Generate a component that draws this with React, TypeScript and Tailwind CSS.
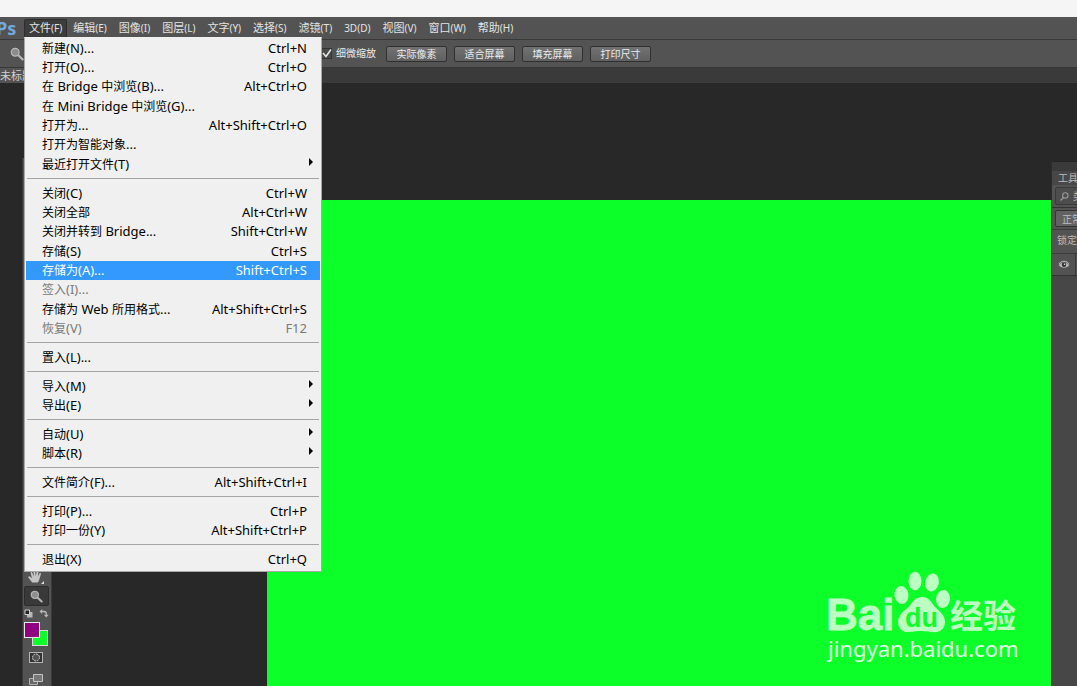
import React from "react";

type Item = { label: string; keys?: string; sub?: boolean; disabled?: boolean; active?: boolean };

const groups: Item[][] = [
  [
    { label: "新建(N)...", keys: "Ctrl+N" },
    { label: "打开(O)...", keys: "Ctrl+O" },
    { label: "在 Bridge 中浏览(B)...", keys: "Alt+Ctrl+O" },
    { label: "在 Mini Bridge 中浏览(G)..." },
    { label: "打开为...", keys: "Alt+Shift+Ctrl+O" },
    { label: "打开为智能对象..." },
    { label: "最近打开文件(T)", sub: true },
  ],
  [
    { label: "关闭(C)", keys: "Ctrl+W" },
    { label: "关闭全部", keys: "Alt+Ctrl+W" },
    { label: "关闭并转到 Bridge...", keys: "Shift+Ctrl+W" },
    { label: "存储(S)", keys: "Ctrl+S" },
    { label: "存储为(A)...", keys: "Shift+Ctrl+S", active: true },
    { label: "签入(I)...", disabled: true },
    { label: "存储为 Web 所用格式...", keys: "Alt+Shift+Ctrl+S" },
    { label: "恢复(V)", keys: "F12", disabled: true },
  ],
  [{ label: "置入(L)..." }],
  [
    { label: "导入(M)", sub: true },
    { label: "导出(E)", sub: true },
  ],
  [
    { label: "自动(U)", sub: true },
    { label: "脚本(R)", sub: true },
  ],
  [{ label: "文件简介(F)...", keys: "Alt+Shift+Ctrl+I" }],
  [
    { label: "打印(P)...", keys: "Ctrl+P" },
    { label: "打印一份(Y)", keys: "Alt+Shift+Ctrl+P" },
  ],
  [{ label: "退出(X)", keys: "Ctrl+Q" }],
];

const menus = ["文件(F)", "编辑(E)", "图像(I)", "图层(L)", "文字(Y)", "选择(S)", "滤镜(T)", "3D(D)", "视图(V)", "窗口(W)", "帮助(H)"];
const zoomButtons = ["实际像素", "适合屏幕", "填充屏幕", "打印尺寸"];

/* Latin runs are set in their own size beside the Chinese glyphs. */
function Mixed({ text, latin }: { text: string; latin: string }) {
  return (
    <>
      {text.split(/([\x20-\x7e]+)/).map((part, i) =>
        i % 2 ? (
          <span key={i} className={latin}>
            {part}
          </span>
        ) : (
          part
        ),
      )}
    </>
  );
}

function Magnifier({ className }: { className?: string }) {
  return (
    <svg viewBox="0 0 14 14" className={className} aria-hidden="true">
      <path d="M8 8l4.6 4.4" stroke="#b4b4b4" strokeWidth="2.2" strokeLinecap="round" />
      <circle cx="5.2" cy="5.2" r="3.9" fill="#8c8c8c" stroke="#b9b9b9" strokeWidth="1.2" />
    </svg>
  );
}

function MenuRow({ item }: { item: Item }) {
  const tone = item.active ? "bg-[#3399ff] text-white" : item.disabled ? "text-[#7a7a7a]" : "text-black";
  return (
    <li className="h-[19px] nth-[3n]:h-5">
      <button
        type="button"
        role="menuitem"
        disabled={item.disabled}
        className={`flex h-full w-full items-center justify-between pr-[13px] pl-4 text-left text-xs whitespace-pre ${tone}`}
      >
        <span>
          <Mixed text={item.label} latin="text-[13px]" />
        </span>
        {item.keys && <span className="text-[13px]">{item.keys}</span>}
        {item.sub && (
          <svg viewBox="0 0 4 8" className="-mr-1.5 mb-1.5 h-2 w-1" aria-hidden="true">
            <path d="M0 0l4 4-4 4z" fill="#000" />
          </svg>
        )}
      </button>
    </li>
  );
}

function FileMenu() {
  return (
    <div
      role="menu"
      aria-label="文件"
      className="absolute top-full left-6 z-10 -mt-0.5 w-[298px] border border-[#a8a8a8] border-t-[#f0f0f0] bg-[#f0f0f0] px-px pt-px pb-0.5"
    >
      {groups.map((g, i) => (
        <React.Fragment key={i}>
          {i > 0 && <hr className="mx-px mt-1 mb-[5px] border-t border-[#a5a5a5]" />}
          <ul>
            {g.map((item) => (
              <MenuRow key={item.label} item={item} />
            ))}
          </ul>
        </React.Fragment>
      ))}
    </div>
  );
}

function Toolbar() {
  return (
    <aside className="mt-[75px] ml-[22px] flex w-[30px] shrink-0 flex-col items-center border-x border-[#3a3a3a] bg-[#535353] pt-[410px] pr-0.5">
      <button type="button" aria-label="抓手工具" className="flex h-[18px] w-6 items-center justify-center">
        <svg viewBox="0 0 18 16" className="h-4 w-[18px]">
          <path
            d="M5.2 13.5L1.5 8.8c-.8-1 .5-2 1.4-1.200l2 1.600L3.700 4c-.2-1.200 1.200-1.500 1.600-.3L6.700 7.200 6.500 2c0-1.200 1.600-1.200 1.700 0l.5 5L9.900 2.200c.3-1.100 1.800-.8 1.600.3L10.900 7.500l1.500-3c.5-1 1.800-.4 1.500.7L12.300 10.500l-1.400 3z"
            fill="#c4c4c4"
          />
          <path d="M17 12v3h-3z" fill="#e0e0e0" />
        </svg>
      </button>
      <button
        type="button"
        aria-label="缩放工具"
        className="flex h-5 w-[25px] items-center justify-center rounded-xs border border-[#2c2c2c] bg-[#393939]"
      >
        <Magnifier className="h-[13px] w-[13px]" />
      </button>
      <div className="mt-[3px] flex gap-1.5">
        <button type="button" aria-label="默认前景色和背景色">
          <svg viewBox="0 0 9 9" className="h-[9px] w-[9px]">
            <path d="M3 3h5.500v5.500H3z" fill="#b8b8b8" />
            <path d="M1 1h4.500v4.500H1z" fill="#222" stroke="#d0d0d0" />
          </svg>
        </button>
        <button type="button" aria-label="切换前景色和背景色">
          <svg viewBox="0 0 10 9" className="h-[9px] w-[10px]">
            <path d="M2.500 2.500h2.500c1.500 0 2.300.8 2.300 2.200v1.800" fill="none" stroke="#b8b8b8" strokeWidth="1.300" />
            <path d="M3.200 0v5L.5 2.500zM4.900 5.800h4.800L7.300 8.600z" fill="#b8b8b8" />
          </svg>
        </button>
      </div>
      <div className="mt-1 grid h-6 w-6 grid-cols-1 grid-rows-1">
        <button
          type="button"
          aria-label="背景色"
          className="col-start-1 row-start-1 h-4 w-4 self-end justify-self-end border border-[#d8d8d8] bg-[#0cff28]"
        />
        <button
          type="button"
          aria-label="前景色"
          className="z-1 col-start-1 row-start-1 h-4 w-4 border border-[#e8e8e8] bg-[#920081]"
        />
      </div>
      <button type="button" aria-label="以快速蒙版模式编辑" className="mt-1.5">
        <svg viewBox="0 0 14 11" className="h-[11px] w-[14px]">
          <rect x=".5" y=".5" width="13" height="10" fill="#333" stroke="#b4b4b4" />
          <circle cx="7" cy="5.500" r="3.500" fill="#555" stroke="#d8d8d8" strokeDasharray="1.800 .900" />
        </svg>
      </button>
      <button type="button" aria-label="更改屏幕模式" className="mt-2.5">
        <svg viewBox="0 0 16 13" className="h-[13px] w-4">
          <path d="M1.500 5.500h8v6h-8z" fill="#666" stroke="#b4b4b4" />
          <path d="M5.500 1.500h9v7h-9z" fill="#777" stroke="#c4c4c4" />
        </svg>
      </button>
    </aside>
  );
}

function LayersPanel() {
  return (
    <aside className="mt-[78px] w-[26px] shrink-0 overflow-hidden rounded-tl-sm border-l border-[#2c2c2c] bg-[#474747] text-[10px] whitespace-nowrap text-[#bdbdbd]">
      <div className="h-2.5 border-t border-[#222] bg-[#3a3a3a]" />
      <h2 className="h-3.5 pl-1.5 leading-3.5">工具</h2>
      <div className="h-[23px] border-b border-[#333] bg-[#535353] py-0.5 pl-[3px]">
        <button type="button" className="flex h-[18px] w-24 items-center gap-1 rounded-xs border border-[#3a3a3a] bg-[#4d4d4d] pl-1">
          <svg viewBox="0 0 9 9" className="h-[9px] w-[9px] shrink-0" aria-hidden="true">
            <path d="M3.500 5.500L.5 8.500" stroke="#9a9a9a" strokeWidth="1.200" />
            <circle cx="5.300" cy="3.500" r="2.700" fill="none" stroke="#9a9a9a" strokeWidth="1.100" />
          </svg>
          类型
        </button>
      </div>
      <div className="h-[22px] border-b border-[#3c3c3c] bg-[#535353] py-0.5 pl-[3px]">
        <button type="button" className="h-[17px] w-24 rounded-xs border border-[#333] bg-[#626262] pl-1.5 text-left leading-3.5">
          正常
        </button>
      </div>
      <p className="h-6 border-b border-[#3c3c3c] bg-[#535353] pl-[5px] leading-[21px]">锁定:</p>
      <div className="h-[22px] border-b border-[#333] bg-[#535353]">
        <button type="button" aria-label="图层可见性" className="flex h-full w-6 items-center justify-center border-r border-[#3c3c3c]">
          <svg viewBox="0 0 12 9" className="h-[9px] w-3">
            <path d="M.8 5.200C3 1.500 9 1.500 11.200 5.200 9 8.500 3 8.500.8 5.200z" fill="#b9b9b9" />
            <path d="M.8 4.200C3 .3 9 .3 11.200 4.200" fill="none" stroke="#c9c9c9" strokeWidth=".9" />
            <circle cx="6" cy="4.800" r="2.200" fill="#303030" />
            <circle cx="6.500" cy="4.200" r=".8" fill="#eee" />
          </svg>
        </button>
      </div>
    </aside>
  );
}

function Watermark() {
  return (
    <svg viewBox="0 0 200 100" className="h-[100px] w-[200px]" role="img" aria-label="Baidu 经验">
      <g fill="#bbffc3">
        <text x="1" y="60" fontSize="44" fontWeight="700" stroke="#bbffc3" strokeWidth=".8" className="font-['Liberation_Sans']">
          Bai
        </text>
        <ellipse cx="76.500" cy="25" rx="7" ry="9" transform="rotate(-8 76.500 25)" />
        <ellipse cx="90" cy="11" rx="6.500" ry="9.200" />
        <ellipse cx="107" cy="12.500" rx="6.800" ry="9.200" transform="rotate(12 107 12.500)" />
        <ellipse cx="118" cy="29" rx="7" ry="9" transform="rotate(8 118 29)" />
        <path d="M97 27c-7 0-9 5-13 9.500C79 41 73 45 73 52c0 7 5 10.500 11 10 5-.4 8-1 13-1s8 1.500 13 1.200c6-.4 10-4 10-10.500 0-7-6-10.500-10.500-15.500C105.500 31.500 104 27 97 27z" />
        <text x="125" y="58" fontSize="33" fontWeight="700" className="font-['Noto_Sans_CJK_SC']">
          经验
        </text>
        <text x="3" y="87" fontSize="22" fill="#e0ffe4" className="font-['Noto_Sans']">
          jingyan.baidu.com
        </text>
      </g>
      <text x="80" y="57" fontSize="27" fontWeight="700" fill="#0cff28" className="font-['Liberation_Sans']">
        du
      </text>
    </svg>
  );
}

export default function App() {
  return (
    <div className="flex h-screen flex-col overflow-hidden bg-[#282828] font-['Noto_Sans','Noto_Sans_CJK_SC',sans-serif]">
      <div className="h-[17px] shrink-0 bg-[#f5f5f5]" />
      <header className="shrink-0">
        <nav className="relative flex h-[22px] items-center bg-[#535353] text-[11px] text-[#e4e4e4]">
          <span className="-ml-1 w-7 font-['Open_Sans'] text-lg leading-5 font-bold text-[#74a7dc]">Ps</span>
          {menus.map((m, i) => (
            <button
              key={m}
              type="button"
              className={
                i === 0
                  ? "h-[18px] rounded-t-xs border border-b-0 border-[#2e2e2e] bg-[#3c3c3c] px-1 whitespace-nowrap"
                  : "h-[18px] px-1.5 whitespace-nowrap"
              }
            >
              <Mixed text={m} latin="text-[10px]" />
            </button>
          ))}
          <FileMenu />
        </nav>
        <div className="flex h-[29px] items-center border-y border-[#383838] bg-[#535353] text-[10px] text-[#ececec]">
          <Magnifier className="ml-2.5 h-3.5 w-3.5" />
          <label className="ml-[297px] flex items-center gap-1 whitespace-nowrap">
            <input type="checkbox" defaultChecked className="peer h-[11px] w-[11px] appearance-none border border-[#333] bg-[#4a4a4a]" />
            <svg viewBox="0 0 11 11" className="-ml-[15px] hidden h-[11px] w-[11px] peer-checked:block" aria-hidden="true">
              <path d="M2 5l3 3.500L10 1.500" fill="none" stroke="#e8e8e8" strokeWidth="1.500" />
            </svg>
            细微缩放
          </label>
          <div className="ml-2.5 flex gap-[7px]">
            {zoomButtons.map((b) => (
              <button
                key={b}
                type="button"
                className="h-4 w-[61px] rounded-xs border border-[#303030] bg-linear-to-b from-[#727272] to-[#606060] leading-3.5 whitespace-nowrap"
              >
                {b}
              </button>
            ))}
          </div>
        </div>
        <div className="flex h-[15px] bg-[#3a3a3a] text-[11px] leading-[15px] text-[#d0d0d0]">
          <button type="button" className="bg-[#535353] pr-4 whitespace-nowrap">
            未标题
          </button>
        </div>
      </header>
      <main className="flex min-h-0 flex-1">
        <Toolbar />
        <section className="flex min-w-0 flex-1 pt-[117px] pl-[215px]">
          <div className="flex flex-1 items-end justify-end bg-[#0cff28] pr-[26px] pb-4">
            <Watermark />
          </div>
        </section>
        <LayersPanel />
      </main>
    </div>
  );
}
